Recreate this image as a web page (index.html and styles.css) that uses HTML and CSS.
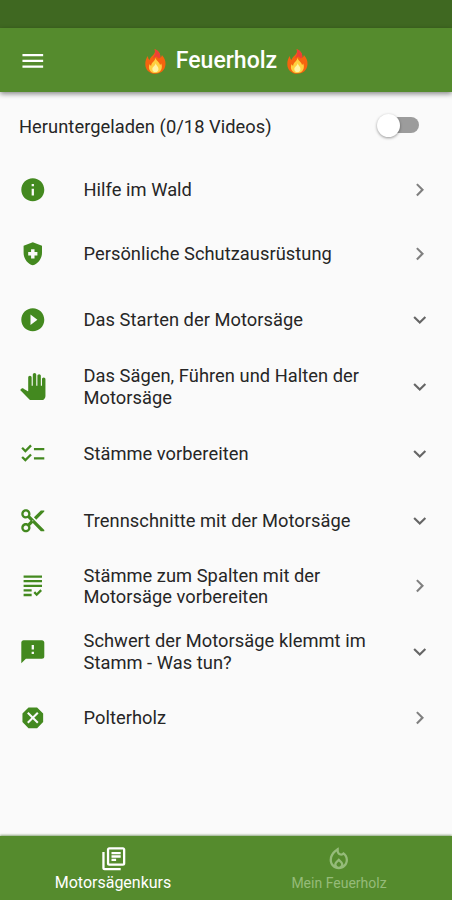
FILE: index.html
```html
<!DOCTYPE html>
<html lang="de">
<head>
<meta charset="utf-8">
<title>Feuerholz</title>
<link rel="stylesheet" href="styles.css">
</head>
<body>
<svg class="defs" width="0" height="0">
  <symbol id="right" viewBox="0 0 24 24"><path d="M10 6 8.59 7.41 13.17 12l-4.58 4.59L10 18l6-6z"/></symbol>
  <symbol id="down" viewBox="0 0 24 24"><path d="M16.59 8.59 12 13.17 7.41 8.59 6 10l6 6 6-6z"/></symbol>
  <symbol id="flame" viewBox="0 0 21 25">
    <path fill="#f5640f" d="M9.6.3c4.2 1.5 6 4.200 5.700 8.300 1-.6 1.500-1.500 1.600-2.700 2.700 2.800 3.800 6 3.600 9.300-.3 5.800-4.500 9.500-10.100 9.500S.4 21 .3 15.400C.2 11.700 1.400 8.900 2.900 7c.1 1.900.6 3.200 1.700 4C4.900 7.200 11.600 5.800 9.600.3z"/>
    <path fill="#ee4036" d="M9.600.3c4.200 1.500 6 4.200 5.700 8.300-1.500 1.700-2.800.2-3.500-1.200-1.200.3-2.700 1.200-3.700 2.200C9 6.900 11.300 4.300 9.600.3z"/>
    <path fill="#ffcf3f" d="M10.300 8.600c.5 3.100 4.500 4.600 4.700 7.500.7-.3 1-.9 1.200-1.500 2 4.400-.5 9.500-5.700 9.500-5.300 0-7.900-4.600-5.900-9.200.4 1 .9 1.500 1.600 1.800.1-3.400 4.300-4.300 4.100-8.100z"/>
    <path fill="#fff3a5" d="M10.700 14.200c.3 2.300 2.800 3.100 2.800 5.700 0 2-1.300 3.200-3.100 3.200s-3.200-1.200-3.100-3.100c.1-2.300 2.900-3 3.400-5.800z"/>
  </symbol>
</svg>
<div class="status"></div>
<header class="bar">
  <svg class="icon menu" viewBox="0 0 24 24"><path d="M3 18h18v-2H3v2zm0-5h18v-2H3v2zm0-7v2h18V6H3z"/></svg>
  <h1 class="title"><svg class="flame"><use href="#flame"/></svg><span>Feuerholz</span><svg class="flame"><use href="#flame"/></svg></h1>
</header>
<main class="content">
  <div class="download">
    <span class="download-label">Heruntergeladen (0/18 Videos)</span>
    <span class="switch"><span class="thumb"></span></span>
  </div>
  <ul class="list">
    <li class="row"><svg class="icon" viewBox="0 0 24 24"><path d="M12 2C6.480 2 2 6.480 2 12s4.480 10 10 10 10-4.480 10-10S17.520 2 12 2zm1 15h-2v-6h2v6zm0-8h-2V7h2v2z"/></svg><span class="label">Hilfe im Wald</span><svg class="chevron next"><use href="#right"/></svg></li>
    <li class="row"><svg class="icon" viewBox="0 0 24 24"><path fill-rule="evenodd" d="M12 2 4 5v6.090c0 5.050 3.410 9.760 8 10.910 4.590-1.150 8-5.860 8-10.910V5l-8-3zM10.500 13.500H8v-3h2.500V8h3v2.500H16v3h-2.500V16h-3z"/></svg><span class="label">Persönliche Schutzausrüstung</span><svg class="chevron next"><use href="#right"/></svg></li>
    <li class="row"><svg class="icon" viewBox="0 0 24 24"><path d="M12 2C6.480 2 2 6.480 2 12s4.480 10 10 10 10-4.480 10-10S17.520 2 12 2zm-2 14.500v-9l6 4.500-6 4.500z"/></svg><span class="label">Das Starten der Motorsäge</span><svg class="chevron"><use href="#down"/></svg></li>
    <li class="row"><svg class="icon" viewBox="0 0 24 24"><path d="M23 5.500V20c0 2.200-1.800 4-4 4h-7.300c-1.080 0-2.100-.43-2.850-1.190L1 14.830s1.260-1.230 1.300-1.250c.22-.19.49-.29.79-.29.22 0 .42.06.6.16.04.01 4.310 2.460 4.310 2.460V4c0-.83.67-1.500 1.500-1.500S11 3.170 11 4v7h1V1.500c0-.83.67-1.500 1.500-1.500S15 .67 15 1.500V11h1V2.500c0-.83.67-1.500 1.500-1.500s1.500.67 1.500 1.500V11h1V5.500c0-.83.67-1.500 1.500-1.500s1.500.67 1.500 1.500z"/></svg><span class="label">Das Sägen, Führen und Halten der Motorsäge</span><svg class="chevron"><use href="#down"/></svg></li>
    <li class="row"><svg class="icon" viewBox="0 0 24 24"><path d="M22 7h-9v2h9V7zm0 8h-9v2h9v-2zM5.540 11 2 7.460l1.410-1.410 2.120 2.120 4.240-4.240 1.410 1.410L5.540 11zm0 8L2 15.460l1.410-1.410 2.120 2.120 4.240-4.240 1.410 1.410L5.540 19z"/></svg><span class="label">Stämme vorbereiten</span><svg class="chevron"><use href="#down"/></svg></li>
    <li class="row"><svg class="icon" viewBox="0 0 24 24"><path d="M9.640 7.640c.23-.5.360-1.050.360-1.640 0-2.210-1.790-4-4-4S2 3.790 2 6s1.790 4 4 4c.59 0 1.140-.13 1.640-.36L10 12l-2.360 2.360C7.140 14.130 6.590 14 6 14c-2.210 0-4 1.790-4 4s1.790 4 4 4 4-1.790 4-4c0-.59-.13-1.140-.36-1.640L12 14l7 7h3v-1L9.640 7.640zM6 8c-1.100 0-2-.89-2-2s.9-2 2-2 2 .89 2 2-.9 2-2 2zm0 12c-1.100 0-2-.89-2-2s.9-2 2-2 2 .89 2 2-.9 2-2 2zm6-7.500c-.28 0-.5-.22-.5-.5s.22-.5.5-.5.5.22.5.5-.22.5-.5.5zM19 3l-6 6 2 2 7-7V3z"/></svg><span class="label">Trennschnitte mit der Motorsäge</span><svg class="chevron"><use href="#down"/></svg></li>
    <li class="row"><svg class="icon" viewBox="0 0 24 24"><path d="M4 7h16v2H4V7zm0 6h16v-2H4v2zm0 4h7v-2H4v2zm0 4h7v-2H4v2zm11.410-2.830L14 16.750l-1.410 1.410L15.410 21 20 16.420 18.580 15l-3.170 3.170zM4 3v2h16V3H4z"/></svg><span class="label">Stämme zum Spalten mit der Motorsäge vorbereiten</span><svg class="chevron next"><use href="#right"/></svg></li>
    <li class="row"><svg class="icon" viewBox="0 0 24 24"><path d="M20 2H4c-1.100 0-1.990.9-1.990 2L2 22l4-4h14c1.100 0 2-.9 2-2V4c0-1.100-.9-2-2-2zm-7 12h-2v-2h2v2zm0-4h-2V6h2v4z"/></svg><span class="label">Schwert der Motorsäge klemmt im Stamm - Was tun?</span><svg class="chevron"><use href="#down"/></svg></li>
    <li class="row"><svg class="icon" viewBox="0 0 24 24"><path d="M15.730 3H8.270L3 8.270v7.460L8.270 21h7.460L21 15.730V8.270L15.730 3zM17 15.740 15.740 17 12 13.260 8.260 17 7 15.740 10.740 12 7 8.260 8.260 7 12 10.740 15.740 7 17 8.260 13.260 12 17 15.740z"/></svg><span class="label">Polterholz</span><svg class="chevron next"><use href="#right"/></svg></li>
  </ul>
</main>
<nav class="tabs">
  <a class="tab active"><svg class="icon" viewBox="0 0 24 24"><path d="M4 6H2v14c0 1.100.9 2 2 2h14v-2H4V6zm16-4H8c-1.100 0-2 .9-2 2v12c0 1.100.9 2 2 2h12c1.100 0 2-.9 2-2V4c0-1.100-.9-2-2-2zm0 14H8V4h12v12zM10 9h8v2h-8zm0 3h4v2h-4zm0-6h8v2h-8z"/></svg><span>Motorsägenkurs</span></a>
  <a class="tab"><svg class="icon" viewBox="0 0 24 24"><path d="M16 6l-.44.55c-.42.52-.98.75-1.540.75C13 7.300 12 6.520 12 5.300V2S4 6 4 13c0 4.420 3.580 8 8 8s8-3.580 8-8c0-2.960-1.610-5.620-4-7zm-4 13c-1.100 0-2-.87-2-1.940 0-.51.2-.99.58-1.360L12 14.300l1.430 1.400c.37.37.57.85.57 1.360 0 1.070-.9 1.940-2 1.940zm3.960-1.500c.04-.36.22-1.890-1.130-3.220L12 11.500l-2.830 2.780C7.810 15.620 8 17.160 8.040 17.500 6.790 16.400 6 14.790 6 13c0-3.160 2.130-5.650 4.030-7.250.23 1.990 1.930 3.550 3.990 3.550.78 0 1.540-.23 2.180-.66C17.340 9.780 18 11.350 18 13c0 1.790-.79 3.400-2.040 4.500z"/></svg><span>Mein Feuerholz</span></a>
</nav>
</body>
</html>
```
FILE: styles.css
```css
* { box-sizing: border-box; }
body {
  margin: 0;
  height: 900px;
  display: flex;
  flex-direction: column;
  overflow: hidden;
  background: #fafafa;
  color: #262626;
  font-family: Roboto, sans-serif;
}
.defs { position: absolute; }
.status { height: 28px; background: #3f6821; flex: none; }
.bar {
  height: 64px;
  padding-top: 2px;
  flex: none;
  display: grid;
  grid-template-columns: 65px 1fr 65px;
  align-items: center;
  background: #558b2d;
  color: #fff;
  box-shadow: 0 2px 5px rgba(0, 0, 0, .45);
}
.icon { width: 27.6px; height: 27.6px; fill: currentColor; flex: none; display: block; }
.menu { margin-left: 18.5px; }
.title {
  margin: 0;
  display: flex;
  justify-content: center;
  align-items: center;
  gap: 10px;
  padding-left: 1px;
  font-size: 23px;
  font-weight: 500;
  line-height: 30px;
}
.flame { width: 21px; height: 25px; }
.content { flex: 1; }
.download {
  height: 65px;
  padding: 5px 33px 0 19px;
  display: flex;
  align-items: center;
  justify-content: space-between;
}
.download-label { font-size: 18.3px; line-height: 22px; letter-spacing: .05px; }
.switch {
  width: 38px;
  height: 16px;
  margin-bottom: 4px;
  border-radius: 8px;
  background: #9c9c9c;
  display: flex;
  align-items: center;
}
.thumb {
  width: 23px;
  height: 23px;
  margin-left: -4px;
  border-radius: 50%;
  background: #fff;
  box-shadow: 0 1px 3px rgba(0, 0, 0, .4);
  flex: none;
}
.list { list-style: none; margin: 0; padding: 0; }
.row {
  height: 67px;
  display: grid;
  grid-template-columns: 64.5px 290px 1fr;
  align-items: center;
  padding-left: 19px;
}
.row:nth-child(1), .row:nth-child(9) { height: 65px; }
.row:nth-child(2), .row:nth-child(7) { height: 64px; }
.row .icon { color: #43891f; }
.label { font-size: 18.3px; line-height: 21.5px; letter-spacing: .04px; }
.chevron { width: 25.5px; height: 25.5px; margin-left: 33.5px; fill: #666; }
.next { fill: #808080; }
.tabs {
  height: 64px;
  flex: none;
  display: grid;
  grid-template-columns: 1fr 1fr;
  background: #558b2d;
  box-shadow: 0 -1px 2px rgba(70, 110, 45, .6);
}
.tab {
  display: flex;
  flex-direction: column;
  align-items: center;
  padding-top: 9px;
  color: #95bb79;
  font-size: 14px;
  line-height: 20px;
}
.active { color: #fff; font-size: 16px; }
.active .icon { margin-left: 1px; }
```
